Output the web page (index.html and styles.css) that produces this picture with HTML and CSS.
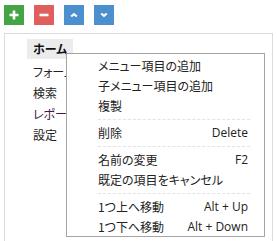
FILE: index.html
```
<!DOCTYPE html>
<html lang="ja">
<head>
<meta charset="utf-8">
<link rel="stylesheet" href="styles.css">
</head>
<body>
<div class="toolbar">
  <button class="btn btn-add" aria-label="追加"><svg width="20" height="20" viewBox="0 0 20 20"><path d="M10 5.5v9M5.5 10h9" stroke="#fff" stroke-width="2.6" fill="none"/></svg></button>
  <button class="btn btn-del" aria-label="削除"><svg width="20" height="20" viewBox="0 0 20 20"><path d="M5.5 10h9" stroke="#fff" stroke-width="2.6" fill="none"/></svg></button>
  <button class="btn btn-move" aria-label="上へ"><svg width="20" height="20" viewBox="0 0 20 20"><path d="M7.2 11.5l2.8-2.4 2.8 2.4" stroke="#fff" stroke-width="2.2" fill="none"/></svg></button>
  <button class="btn btn-move" aria-label="下へ"><svg width="20" height="20" viewBox="0 0 20 20"><path d="M7.2 8.5l2.8 2.4 2.8-2.4" stroke="#fff" stroke-width="2.2" fill="none"/></svg></button>
</div>
<div class="panel">
  <ul class="tree">
    <li class="node selected"><span class="label">ホーム</span></li>
    <li class="node"><span class="label">フォーム</span></li>
    <li class="node"><span class="label">検索</span></li>
    <li class="node visited"><span class="label">レポート</span></li>
    <li class="node"><span class="label">設定</span></li>
  </ul>
  <div class="menu">
    <div class="item"><span>メニュー項目の追加</span></div>
    <div class="item"><span>子メニュー項目の追加</span></div>
    <div class="item"><span>複製</span></div>
    <div class="sep"></div>
    <div class="item"><span>削除</span><span class="key">Delete</span></div>
    <div class="sep"></div>
    <div class="item"><span>名前の変更</span><span class="key">F2</span></div>
    <div class="item"><span>既定の項目をキャンセル</span></div>
    <div class="sep"></div>
    <div class="item"><span>1つ上へ移動</span><span class="key">Alt + Up</span></div>
    <div class="item"><span>1つ下へ移動</span><span class="key">Alt + Down</span></div>
  </div>
</div>
</body>
</html>
```
FILE: styles.css
```
html, body {
  margin: 0;
  padding: 0;
  background: #fff;
  overflow: hidden;
}
body {
  font-family: "Noto Sans CJK JP", "Noto Sans", sans-serif;
  font-size: 12px;
  color: #222;
  font-feature-settings: "palt";
}
.toolbar {
  display: flex;
  gap: 10px;
  padding: 5px 0 0 4px;
}
.btn {
  width: 20px;
  height: 20px;
  border: 0;
  padding: 0;
  margin: 0;
  display: block;
}
.btn svg { display: block; }
.btn-add { background: #45a545; }
.btn-del { background: #e05f5d; }
.btn-move { background: #4b8fcf; }
.panel {
  position: relative;
  margin: 8px 0 0 4px;
  width: 267px;
  height: 207px;
  border: 1px solid #dcdcdc;
  border-bottom: 0;
}
.tree {
  list-style: none;
  margin: 0;
  padding: 5px 0 0 22px;
}
.node {
  height: 21px;
  line-height: 21px;
}
.node.selected {
  height: 22px;
  line-height: 20px;
}
.label {
  display: inline-block;
  padding: 0 6px 0 6px;
}
.selected .label {
  background: #ececec;
  font-weight: bold;
  color: #111;
}
.visited .label { color: #3c1a48; }
.menu {
  position: absolute;
  left: 61px;
  top: 19px;
  width: 197px;
  height: 180px;
  border: 1px solid #a5a5a5;
  background: #fff;
  padding-top: 2px;
}
.item {
  display: flex;
  justify-content: space-between;
  height: 20px;
  line-height: 20px;
  padding: 0 16px 0 31px;
  color: #222;
}
.key {
  font-family: "Open Sans", "Noto Sans", sans-serif;
  font-size: 12px;
  color: #222;
}
.sep {
  margin: 3px 14px 3px 31px;
  border-top: 1px dashed #e2e2e2;
}
```
